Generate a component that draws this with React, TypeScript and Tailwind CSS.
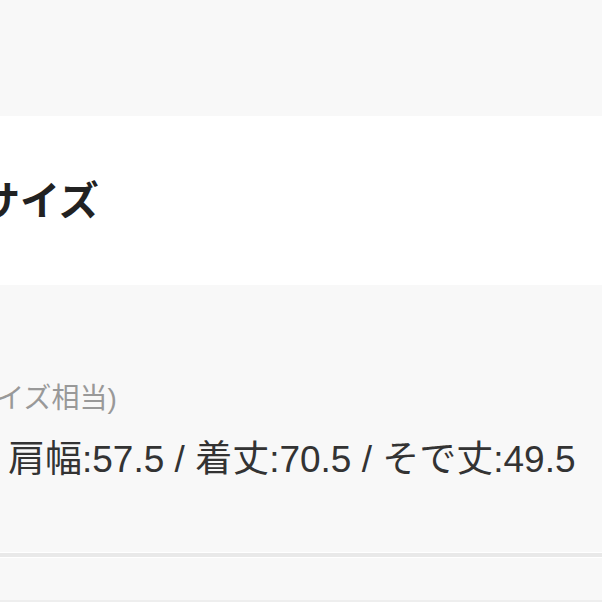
export default function App() {
  return (
    <div
      className="w-[602px] h-[602px] overflow-hidden bg-[#f8f8f8] text-[#222]"
      style={{ fontFamily: '"Liberation Sans", "Noto Sans CJK JP", sans-serif' }}
    >
      <div className="h-[116px]" />

      <section className="h-[169px] bg-white flex items-center">
        <h2 className="-ml-[20px] text-[40px] leading-[46px] font-bold whitespace-nowrap">
          サイズ
        </h2>
      </section>

      <div className="pt-[99px] pb-[72px]">
        <p className="-ml-[41px] text-[28px] leading-[30px] text-[#999] whitespace-nowrap">
          (サイズ相当)
        </p>
        <p className="mt-[26px] ml-[8px] text-[37px] leading-[40px] text-[#333] whitespace-nowrap">
          肩幅:57.5 / 着丈:70.5 / そで丈:49.5
        </p>
      </div>

      <div className="h-px bg-white" />
      <div className="h-[4px] bg-[#e9e9e9]" />
      <div className="h-px bg-white" />
      <div className="h-[42px]" />
      <div className="h-[2px] bg-[#eeeeee]" />
    </div>
  );
}
